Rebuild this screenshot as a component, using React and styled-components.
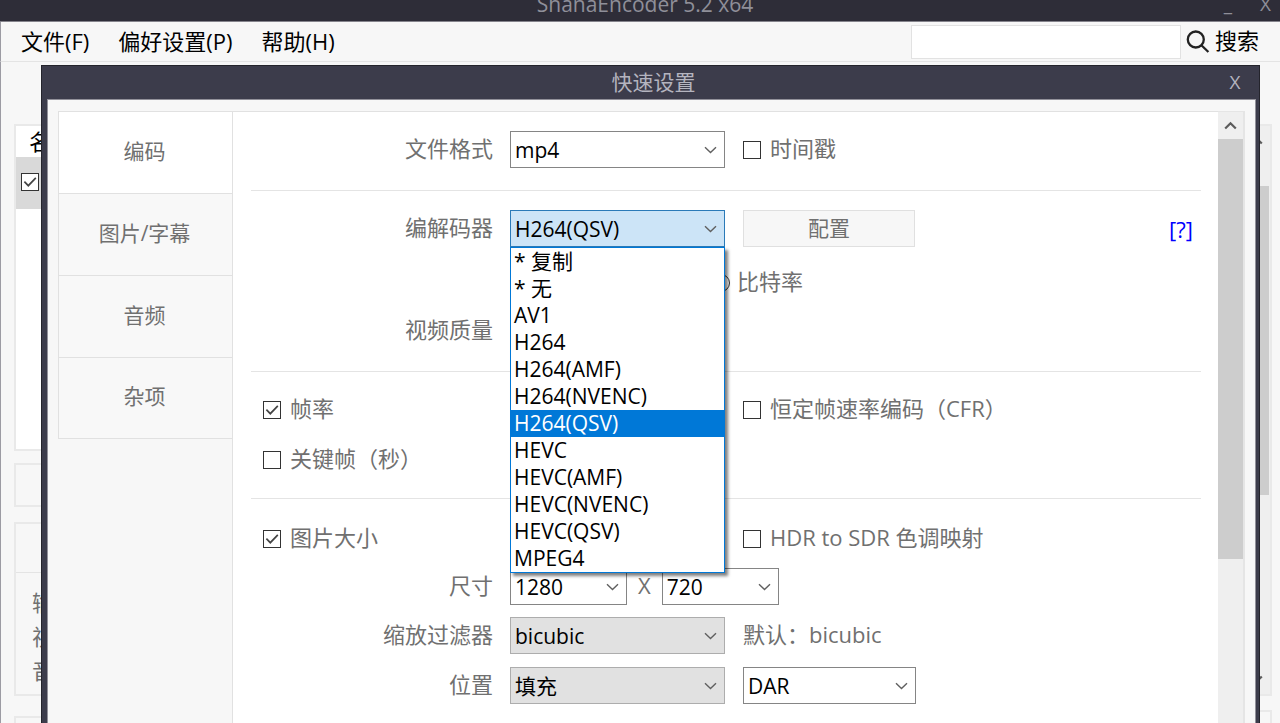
import React, { useState } from "react";
import styled, { createGlobalStyle } from "styled-components";

const codecs = [
  "* 复制",
  "* 无",
  "AV1",
  "H264",
  "H264(AMF)",
  "H264(NVENC)",
  "H264(QSV)",
  "HEVC",
  "HEVC(AMF)",
  "HEVC(NVENC)",
  "HEVC(QSV)",
  "MPEG4",
];

const tabs = ["编码", "图片/字幕", "音频", "杂项"];

const Combo = ({ id, label, options, width, muted }) => (
  <ComboWrap $width={width}>
    <ComboSelect id={id} aria-label={label} $muted={muted}>
      {options.map((option) => (
        <option key={option}>{option}</option>
      ))}
    </ComboSelect>
    <Chevron />
  </ComboWrap>
);

const Chevron = () => (
  <ChevronIcon viewBox="0 0 13 8" aria-hidden="true">
    <path d="M1 1.2 6.5 6.5 12 1.2" />
  </ChevronIcon>
);

const Check = ({ label, checked, hint }) => (
  <CheckLabel>
    <CheckBox>
      <CheckInput type="checkbox" defaultChecked={checked} aria-label={hint} />
      <CheckMark viewBox="0 0 17 17" aria-hidden="true">
        <path d="M3.2 8.2 6.9 12 14 4.6" />
      </CheckMark>
    </CheckBox>
    {label && <Text>{label}</Text>}
  </CheckLabel>
);

const App = () => {
  const [tab, setTab] = useState(0);
  const [codec, setCodec] = useState("H264(QSV)");
  const [open, setOpen] = useState(true);

  const pickCodec = (name) => {
    setCodec(name);
    setOpen(false);
  };

  return (
    <>
      <GlobalStyle />
      <Desktop>
        <MainWindow>
          <TitleBar>
            <TitleText>ShanaEncoder 5.2 x64</TitleText>
            <TitleButtons>
              <TitleButton type="button">_</TitleButton>
              <TitleButton type="button">X</TitleButton>
            </TitleButtons>
          </TitleBar>
          <MenuBar>
            <MenuItem type="button">文件(F)</MenuItem>
            <MenuItem type="button">偏好设置(P)</MenuItem>
            <MenuItem type="button">帮助(H)</MenuItem>
            <SearchInput type="text" aria-label="搜索" />
            <SearchButton type="button">
              <SearchIcon viewBox="0 0 24 24" aria-hidden="true">
                <circle cx="9.8" cy="9.5" r="8" />
                <path d="M15.4 15.2 22.4 22" />
              </SearchIcon>
              <Text>搜索</Text>
            </SearchButton>
          </MenuBar>
          <MainBody>
            <MainColumn>
              <FileList>
                <FileHeader>名</FileHeader>
                <FileRow>
                  <Check checked hint="名" />
                </FileRow>
              </FileList>
              <ActionPanel />
              <InfoPanel>
                <InfoHeader />
                <InfoLine>输</InfoLine>
                <InfoLine>视</InfoLine>
                <InfoLine>音</InfoLine>
              </InfoPanel>
              <BottomPanel />
            </MainColumn>
            <SideColumn>
              <SidePanel>
                <ScrollArrow $side viewBox="0 0 13 9">
                  <path d="M1.2 7.6 6.5 2.2 11.8 7.6" />
                </ScrollArrow>
                <SideThumb />
                <ScrollArrow $side viewBox="0 0 13 9">
                  <path d="M1.2 1.4 6.5 6.8 11.8 1.4" />
                </ScrollArrow>
              </SidePanel>
              <BottomPanel />
            </SideColumn>
          </MainBody>
        </MainWindow>

        <Dialog role="dialog" aria-labelledby="dialog-title">
          <DialogHeader>
            <DialogTitle id="dialog-title">快速设置</DialogTitle>
            <DialogClose type="button">X</DialogClose>
          </DialogHeader>
          <DialogBody>
            <TabList>
              {tabs.map((name, i) => (
                <Tab
                  key={name}
                  type="button"
                  $active={i === tab}
                  onClick={() => setTab(i)}
                >
                  {name}
                </Tab>
              ))}
            </TabList>

            <Form>
              <Section>
                <Row>
                  <Label htmlFor="format">文件格式</Label>
                  <Combo id="format" options={["mp4"]} />
                  <Check label="时间戳" />
                </Row>
              </Section>

              <Section>
                <Row>
                  <Label htmlFor="codec">编解码器</Label>
                  <ComboWrap>
                    <ComboSelect
                      id="codec"
                      $open={open}
                      value={codec}
                      onChange={(e) => pickCodec(e.target.value)}
                    >
                      {codecs.map((name) => (
                        <option key={name}>{name}</option>
                      ))}
                    </ComboSelect>
                    <Chevron />
                    {open && (
                      <CodecList role="listbox">
                        {codecs.map((name) => (
                          <CodecItem
                            key={name}
                            role="option"
                            aria-selected={name === codec}
                            $selected={name === codec}
                            onClick={() => pickCodec(name)}
                          >
                            {name}
                          </CodecItem>
                        ))}
                      </CodecList>
                    )}
                  </ComboWrap>
                  <Group>
                    <ConfigButton type="button">配置</ConfigButton>
                    <HelpLink href="#help">[?]</HelpLink>
                  </Group>
                </Row>
                <Row $top={17}>
                  <RateMode>
                    <RadioInput type="radio" name="rate" />
                    <Text>比特率</Text>
                  </RateMode>
                </Row>
                <Row $top={11}>
                  <Label htmlFor="quality">视频质量</Label>
                  <TextInput id="quality" type="text" />
                </Row>
              </Section>

              <Section $bottom={20}>
                <Row>
                  <CheckCell>
                    <Check label="帧率" checked />
                  </CheckCell>
                  <Check label="恒定帧速率编码（CFR）" />
                </Row>
                <Row $top={13}>
                  <CheckCell>
                    <Check label="关键帧（秒）" />
                  </CheckCell>
                </Row>
              </Section>

              <Section $top={21}>
                <Row>
                  <CheckCell>
                    <Check label="图片大小" checked />
                  </CheckCell>
                  <Check label="HDR to SDR 色调映射" />
                </Row>
                <Row $top={11}>
                  <Label htmlFor="width">尺寸</Label>
                  <SizeGroup>
                    <Combo id="width" options={["1280"]} width={117} />
                    <Text>X</Text>
                    <Combo label="尺寸" options={["720"]} width={117} />
                  </SizeGroup>
                </Row>
                <Row $top={12}>
                  <Label htmlFor="filter">缩放过滤器</Label>
                  <Combo id="filter" options={["bicubic"]} muted />
                  <Text>默认：bicubic</Text>
                </Row>
                <Row $top={13}>
                  <Label htmlFor="position">位置</Label>
                  <Combo id="position" options={["填充"]} muted />
                  <Combo label="DAR" options={["DAR"]} width={173} />
                </Row>
              </Section>
            </Form>

            <ScrollBar>
              <ScrollArrow viewBox="0 0 13 9">
                <path d="M1.2 7.6 6.5 2.2 11.8 7.6" />
              </ScrollArrow>
              <ScrollThumb />
            </ScrollBar>
          </DialogBody>
        </Dialog>
      </Desktop>
    </>
  );
};

export default App;

const GlobalStyle = createGlobalStyle`
  * {
    box-sizing: border-box;
  }
  body {
    margin: 0;
    background: #f7f7f7;
    color: #707070;
    font-family: "Open Sans", "Noto Sans CJK SC", sans-serif;
    font-size: 22px;
    line-height: 30px;
  }
  button, input, select {
    margin: 0;
    font-family: inherit;
    font-size: inherit;
    line-height: inherit;
    color: inherit;
  }
`;

/* both windows share one grid cell, the dialog lies over the main window */
const Desktop = styled.div`
  display: grid;
  grid-template: 1fr / minmax(0, 1fr);
  min-height: 100vh;
  overflow: hidden;
`;

const MainWindow = styled.main`
  grid-area: 1 / 1;
  display: flex;
  flex-direction: column;
`;

const TitleBar = styled.header`
  display: flex;
  align-items: flex-end;
  height: 22px;
  padding-bottom: 2px;
  overflow: hidden;
  background: #2e2d38;
  border-bottom: 1px solid #85848c;
  color: #8f8f99;
`;
const TitleText = styled.h1`
  flex: 1;
  margin: 0;
  padding-left: 100px;
  font-size: 21px;
  font-weight: normal;
  text-align: center;
`;
const TitleButtons = styled.div`
  display: flex;
  justify-content: flex-end;
  gap: 28px;
  width: 90px;
  padding-right: 9px;
`;
const TitleButton = styled.button`
  padding: 0;
  border: 0;
  background: none;
  font-size: 19px;
`;

const MenuBar = styled.nav`
  display: flex;
  align-items: center;
  height: 40px;
  padding: 0 21px 0 20px;
  border-left: 1px solid #9c9ba3;
  border-bottom: 1px solid #e4e4e4;
  color: #000;
`;
const MenuItem = styled.button`
  padding: 0 0 2px;
  margin-right: 29px;
  border: 0;
  background: none;
`;
const SearchInput = styled.input`
  width: 270px;
  height: 34px;
  margin-left: auto;
  border: 1px solid #e2e2e2;
  background: #fff;
`;
const SearchButton = styled.button`
  display: flex;
  align-items: center;
  gap: 5px;
  padding: 0 0 0 5px;
  border: 0;
  background: none;
`;
const SearchIcon = styled.svg`
  width: 24px;
  height: 24px;
  fill: none;
  stroke: #222;
  stroke-width: 2.3;
`;

const MainBody = styled.div`
  flex: 1;
  display: flex;
  justify-content: space-between;
  padding: 62px 8px 0 13px;
  border-left: 1px solid #9c9ba3;
`;
const MainColumn = styled.div`
  flex: 1;
  display: flex;
  flex-direction: column;
`;
const Panel = styled.section`
  border: 2px solid #e9e9e9;
`;
const FileList = styled(Panel)`
  height: 327px;
  background: #fff;
  color: #000;
`;
const FileHeader = styled.div`
  padding-left: 13px;
  height: 31px;
`;
const FileRow = styled.div`
  display: flex;
  align-items: center;
  height: 52px;
  padding: 0 0 3px 5px;
  background: #d9d9d9;
`;
const ActionPanel = styled(Panel)`
  height: 44px;
  margin-top: 12px;
`;
const InfoPanel = styled(Panel)`
  height: 174px;
  margin-top: 15px;
`;
const InfoHeader = styled.div`
  height: 49px;
  margin-bottom: 12px;
  border-bottom: 1px solid #e4e4e4;
`;
const InfoLine = styled.div`
  padding-left: 16px;
  line-height: 34px;
`;
const BottomPanel = styled(Panel)`
  flex: 1;
  min-height: 7px;
  margin-top: 20px;
  border-bottom: 0;
`;
const SideColumn = styled.div`
  display: flex;
  flex-direction: column;
  width: 62px;

  ${BottomPanel} {
    margin-top: 14px;
  }
`;
const SidePanel = styled(Panel)`
  display: flex;
  flex-direction: column;
  align-items: flex-end;
  height: 572px;
  padding: 10px 1px 10px 0;
  background: #efefef;
`;
const SideThumb = styled.div`
  width: 24px;
  height: 309px;
  margin: 41px 0 auto;
  background: #cdcdcd;
`;

const Dialog = styled.section`
  grid-area: 1 / 1;
  z-index: 1;
  display: flex;
  flex-direction: column;
  margin: 65px 20px 0 41px;
  padding: 0 3px 0 5px;
  border: 1px solid #24242c;
  border-bottom: 0;
  background: #3c3c4b;
`;
const DialogHeader = styled.header`
  display: flex;
  align-items: center;
  height: 33px;
  padding-bottom: 2px;
  color: #b4b4bf;
`;
const DialogTitle = styled.h2`
  flex: 1;
  margin: 0;
  padding-left: 46px;
  font-size: 21px;
  font-weight: normal;
  text-align: center;
`;
const DialogClose = styled.button`
  width: 42px;
  padding: 0;
  border: 0;
  background: none;
  font-size: 19px;
`;
const DialogBody = styled.div`
  flex: 1;
  display: flex;
  padding: 11px 10px 0;
  border: 1px solid #92919a;
  border-bottom: 0;
  background: #f7f7f7;
`;

const TabList = styled.div`
  display: flex;
  flex-direction: column;
  width: 174px;
`;
const Tab = styled.button`
  height: 82px;
  padding: 0 2px 4px 0;
  border: 1px solid #e1e1e1;
  border-width: 1px 0 0 1px;
  background: ${({ $active }) => ($active ? "#fff" : "#f8f8f8")};
  font-size: 21px;

  &:last-child {
    border-bottom-width: 1px;
  }
`;

const Form = styled.form`
  flex: 1;
  padding: 0 17px 0 18px;
  border: 1px solid #e1e1e1;
  border-width: 1px 0 0 1px;
  background: #fff;
`;
const Section = styled.div`
  padding-top: ${({ $top = 19 }) => $top}px;
  padding-bottom: ${({ $bottom = 22 }) => $bottom}px;
  border-bottom: 1px solid #e4e4e4;

  &:last-child {
    padding-bottom: 0;
    border-bottom: 0;
  }
`;
const Row = styled.div`
  display: grid;
  grid-template-columns: 242px 216px 1fr;
  column-gap: 17px;
  align-items: center;
  height: 37px;
  margin-top: ${({ $top = 0 }) => $top}px;
`;
const Text = styled.span`
  padding-bottom: 3px;
`;
const Label = styled.label`
  padding-bottom: 3px;
  text-align: right;
`;
const CheckCell = styled.div`
  grid-column: span 2;
  padding-left: 12px;
`;
const Group = styled.div`
  display: flex;
  align-items: center;
  justify-content: space-between;
  padding-right: 8px;
`;
const SizeGroup = styled.div`
  grid-column: span 2;
  display: flex;
  align-items: center;
  gap: 11px;
`;

const ComboWrap = styled.div`
  position: relative;
  width: ${({ $width = 215 }) => $width}px;
  height: 37px;
`;
const ComboSelect = styled.select`
  appearance: none;
  display: block;
  width: 100%;
  height: 100%;
  padding: 0 26px 0 4px;
  border: 1px solid
    ${({ $open, $muted }) => ($open ? "#2a7ab8" : $muted ? "#adadad" : "#858585")};
  border-radius: 0;
  outline: 0;
  background: ${({ $open, $muted }) =>
    $open ? "#cce4f7" : $muted ? "#e1e1e1" : "#fff"};
  color: #000;
  font-size: 21px;
`;
const ChevronIcon = styled.svg`
  position: absolute;
  top: 15px;
  right: 8px;
  width: 13px;
  height: 8px;
  fill: none;
  stroke: #606060;
  stroke-width: 1.4;
  pointer-events: none;
`;
const CodecList = styled.ul`
  position: absolute;
  z-index: 2;
  top: 100%;
  left: 0;
  right: 0;
  margin: 0;
  padding: 0;
  border: 1px solid #0078d7;
  background: #fff;
  box-shadow: 3px 3px 3px rgba(0, 0, 0, 0.5);
  list-style: none;
`;
const CodecItem = styled.li`
  padding-left: 3px;
  background: ${({ $selected }) => ($selected ? "#0078d7" : "#fff")};
  color: ${({ $selected }) => ($selected ? "#fff" : "#000")};
  font-size: 21px;
  line-height: 27px;
`;
const ConfigButton = styled.button`
  width: 172px;
  height: 37px;
  padding: 0 0 2px;
  border: 1px solid #e0e0e0;
  background: #f7f7f7;
  font-size: 21px;
`;
const HelpLink = styled.a`
  color: #0000ff;
  text-decoration: none;
`;
const RateMode = styled.label`
  grid-column: 2 / -1;
  display: flex;
  align-items: center;
  gap: 7px;
  padding-left: 202px;
`;
const RadioInput = styled.input`
  appearance: none;
  width: 18px;
  height: 18px;
  border: 1px solid #333;
  border-radius: 50%;
  background: #fff;
`;
const TextInput = styled.input`
  width: 215px;
  height: 37px;
  border: 1px solid #858585;
  background: #fff;
`;

const CheckLabel = styled.label`
  display: inline-flex;
  align-items: center;
  gap: 9px;
`;
const CheckBox = styled.span`
  position: relative;
  width: 18px;
  height: 18px;
`;
const CheckMark = styled.svg`
  position: absolute;
  inset: 0;
  display: none;
  fill: none;
  stroke: #444;
  stroke-width: 1.6;
  pointer-events: none;
`;
const CheckInput = styled.input`
  appearance: none;
  display: block;
  width: 18px;
  height: 18px;
  border: 1px solid #333;
  background: #fff;

  &:checked + ${CheckMark} {
    display: block;
  }
`;

const ScrollBar = styled.div`
  display: flex;
  flex-direction: column;
  align-items: center;
  width: 27px;
  padding-top: 9px;
  border: solid #e5e5e5;
  border-width: 1px 2px 0 0;
  background: #efefef;
`;
const ScrollArrow = styled.svg`
  flex: none;
  width: 13px;
  height: 9px;
  margin-right: ${({ $side }) => ($side ? 6 : 0)}px;
  fill: none;
  stroke: #5c5c5c;
  stroke-width: 2.2;
`;
const ScrollThumb = styled.div`
  width: 25px;
  height: 420px;
  margin-top: 9px;
  background: #cdcdcd;
`;
